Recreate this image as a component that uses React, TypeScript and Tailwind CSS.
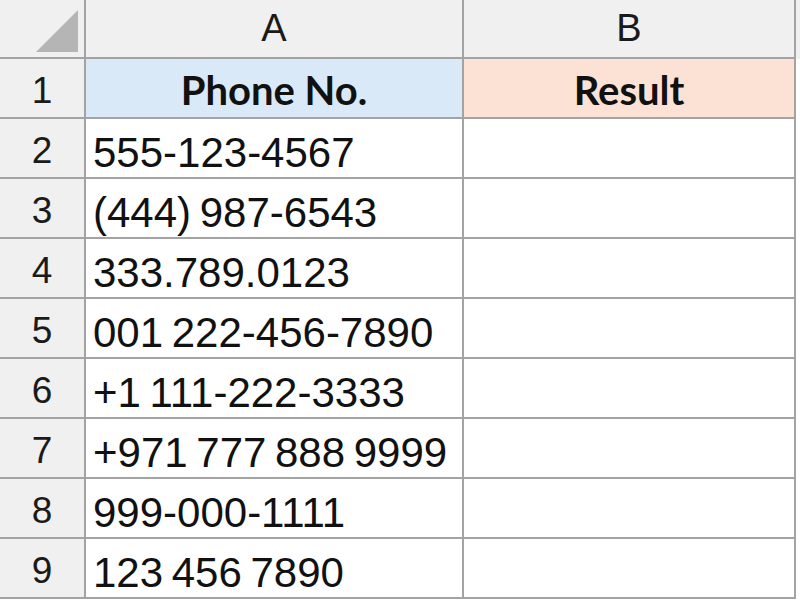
import React from 'react';

const phones = [
  '555-123-4567',
  '(444) 987-6543',
  '333.789.0123',
  '001 222-456-7890',
  '+1 111-222-3333',
  '+971 777 888 9999',
  '999-000-1111',
  '123 456 7890',
];

const line = 'border-[#a3a3a3]';

function RowHead({ n }: { n: number }) {
  return (
    <div
      className={`w-[86px] h-[60px] shrink-0 flex items-center justify-center pt-[6px] bg-[#f0f0f0] border-r-2 border-b-2 ${line} text-[37px] text-[#1a1a1a]`}
      style={{ fontFamily: '"Liberation Sans", Arial, sans-serif' }}
    >
      {n}
    </div>
  );
}

export default function App() {
  return (
    <div className="w-[800px] h-[604px] bg-white overflow-hidden">
      {/* column headers */}
      <div className="flex h-[59px]">
        <div className={`w-[86px] shrink-0 bg-[#f0f0f0] border-r-2 border-b-2 ${line} relative`}>
          <svg className="absolute left-[36px] top-[10px]" width="42" height="42" viewBox="0 0 42 42">
            <polygon points="42,0 42,42 0,42" fill="#b5b5b5" />
          </svg>
        </div>
        <div
          className={`w-[378px] shrink-0 bg-[#f0f0f0] border-r-2 border-b-2 ${line} flex items-center justify-center text-[38px] text-[#1a1a1a]`}
          style={{ fontFamily: '"Liberation Sans", Arial, sans-serif' }}
        >
          A
        </div>
        <div
          className={`w-[332px] shrink-0 bg-[#f0f0f0] border-r-2 border-b-2 ${line} flex items-center justify-center text-[38px] text-[#1a1a1a]`}
          style={{ fontFamily: '"Liberation Sans", Arial, sans-serif' }}
        >
          B
        </div>
        <div className="flex-1 bg-[#f0f0f0]" />
      </div>

      {/* row 1 */}
      <div className="flex">
        <RowHead n={1} />
        <div
          className={`w-[378px] h-[60px] shrink-0 bg-[#dae9f8] border-r-2 border-b-2 ${line} flex items-center justify-center pt-[4px] text-[40px] font-bold text-[#111]`}
          style={{ fontFamily: 'Lato, "Liberation Sans", sans-serif' }}
        >
          Phone No.
        </div>
        <div
          className={`w-[332px] h-[60px] shrink-0 bg-[#fbe2d5] border-r-2 border-b-2 ${line} flex items-center justify-center pt-[4px] text-[40px] font-bold text-[#111]`}
          style={{ fontFamily: 'Lato, "Liberation Sans", sans-serif' }}
        >
          Result
        </div>
      </div>

      {phones.map((p, i) => (
        <div key={i} className="flex">
          <RowHead n={i + 2} />
          <div
            className={`w-[378px] h-[60px] shrink-0 border-r-2 border-b-2 ${line} flex items-center pl-[7px] pt-[8px] text-[42px] text-[#111] whitespace-nowrap [word-spacing:-3px]`}
            style={{ fontFamily: '"Liberation Sans", Arial, sans-serif' }}
          >
            {p}
          </div>
          <div className={`w-[332px] h-[60px] shrink-0 border-r-2 border-b-2 ${line}`} />
        </div>
      ))}
    </div>
  );
}
